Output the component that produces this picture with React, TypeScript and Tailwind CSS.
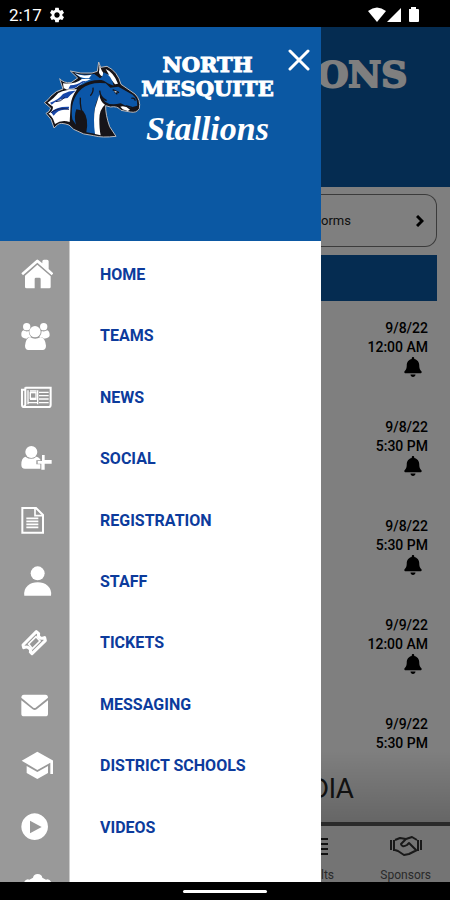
import type { ReactNode } from "react";
import { FaBell } from "react-icons/fa";
import { MdSettings } from "react-icons/md";

type MenuItem = { label: string; viewBox: string; art: ReactNode };

const MENU: MenuItem[] = [
  {
    label: "HOME",
    viewBox: "63 84 96 96",
    art: (
      <>
        <path d="M64 127 L109 87 Q112 84 115 87 L127 97 V91 Q127 86 132 86 H141 Q146 86 146 91 V114 L160 127 L155 133 L112 95 L69 133 Z" />
        <path d="M112 101 L152 136 V168 Q152 172 148 172 H122 V144 Q122 140 118 140 H108 Q104 140 104 144 V172 H80 Q75 172 75 168 V134 Z" />
      </>
    ),
  },
  {
    label: "TEAMS",
    viewBox: "63 267 96 96",
    art: (
      <>
        <circle cx="80" cy="287" r="11" />
        <circle cx="131" cy="287" r="11" />
        <circle cx="105" cy="302" r="17" />
        <path d="M70 298 Q79 303 86 300 Q86 311 93 318 Q82 318 80 323 Q64 322 64 313 Q63 301 70 298 Z" />
        <path d="M142 298 Q133 303 125 300 Q125 311 118 318 Q129 318 131 323 Q149 322 149 313 Q149 301 142 298 Z" />
        <path d="M90 318 Q105 328 122 318 Q136 322 138 344 Q138 356 128 357 H85 Q75 356 75 344 Q77 322 90 318 Z" />
      </>
    ),
  },
  {
    label: "NEWS",
    viewBox: "63 450 96 96",
    art: (
      <g fill="none" stroke="white" strokeWidth="6">
        <path d="M76 467 H152 V518 Q152 525 146 525 H73 Q66 525 66 518 V473 H75 M76 466 V518 Q75 524 70 525" />
        <path d="M84 475 V517 M113 475 V517 M90 477 H110 M90 502 H110 M117 481 H146 M117 491 H146 M117 501 H146 M117 512 H146 M84 512 H111" strokeWidth="4" />
        <rect x="91" y="482" width="17" height="17" strokeWidth="4" />
      </g>
    ),
  },
  {
    label: "SOCIAL",
    viewBox: "63 36 96 96",
    art: (
      <>
        <circle cx="94" cy="63" r="18" />
        <path d="M76 77 Q94 90 109 77 Q120 80 122 88 H109 V100 H121 V113 H75 Q64 113 64 101 Q64 80 76 77 Z" />
        <path d="M126 72 H134 V87 H155 V98 H134 V116 H124 V98 H113 V90 H126 Z" />
      </>
    ),
  },
  {
    label: "REGISTRATION",
    viewBox: "63 219 96 96",
    art: (
      <g fill="none" stroke="white" strokeWidth="6">
        <path d="M67 228 H108 L129 249 V302 H67 Z" />
        <path d="M105 229 V251 H128" strokeWidth="5" />
        <path d="M79 259 H115 M79 268 H115 M79 277 H115 M79 286 H115" strokeWidth="5" />
      </g>
    ),
  },
  {
    label: "STAFF",
    viewBox: "63 404 96 96",
    art: (
      <>
        <circle cx="113" cy="426" r="21" />
        <path d="M73 493 Q70 475 83 463 Q96 453 113 453 Q130 453 143 463 Q156 475 153 493 Z" />
      </>
    ),
  },
  {
    label: "TICKETS",
    viewBox: "63 18 96 96",
    art: (
      <g fill="none" stroke="white">
        <path d="M69 72 L109 32 L116 38 Q113 46 120 50 Q126 54 134 50 L136 59 L96 98 L91 93 Q94 86 87 81 Q80 76 71 80 Z" strokeWidth="9" strokeLinejoin="round" />
        <path d="M86 69 L108 47 L120 60 L97 83 Z" strokeWidth="5" />
      </g>
    ),
  },
  {
    label: "MESSAGING",
    viewBox: "63 202 96 96",
    art: (
      <>
        <path d="M64 228 Q64 219 72 219 H136 Q144 219 144 228 L107 258 Q104 260 100 258 Z" />
        <path d="M64 236 L98 263 Q104 267 110 263 L144 236 V276 Q144 284 136 284 H72 Q64 284 64 276 Z" />
      </>
    ),
  },
  {
    label: "DISTRICT SCHOOLS",
    viewBox: "63 387 96 96",
    art: (
      <>
        <path d="M65 419 L112 392 L160 419 V459 H151 V425 L112 447 Z" />
        <path d="M80 435 L112 453 L144 435 V456 L112 474 L80 456 Z" />
      </>
    ),
  },
  {
    label: "VIDEOS",
    viewBox: "63 573 96 96",
    art: <path fillRule="evenodd" d="M104 577 A40 40 0 1 1 103.900 577 Z M90 599 V637 L125 618 Z" />,
  },
  {
    label: "SETTINGS",
    viewBox: "63 756 96 96",
    art: (
      <path d="M99 770 Q101 759 113 759 Q125 759 127 770 L138 776 Q148 772 154 784 L158 806 V840 H68 V806 L72 784 Q78 772 88 776 Z" />
    ),
  },
];

const EVENTS = [
  { date: "9/8/22", time: "12:00 AM" },
  { date: "9/8/22", time: "5:30 PM" },
  { date: "9/8/22", time: "5:30 PM" },
  { date: "9/9/22", time: "12:00 AM" },
  { date: "9/9/22", time: "5:30 PM" },
];

const SLAB = "font-['DejaVu_Serif','Liberation_Serif',serif] font-bold";

function StatusBar() {
  return (
    <div className="flex h-[27px] shrink-0 items-center justify-between bg-black pl-[9px] pr-[31px] pt-[2px] text-white">
      <div className="flex items-center gap-[6px]">
        <span className="text-[17px] leading-5">2:17</span>
        <MdSettings className="h-[18px] w-[18px]" />
      </div>
      <svg viewBox="0 0 51 16" className="h-4 w-[51px]" fill="white" aria-hidden="true">
        <path d="M0 4 Q9 -3 18 4 L9 15 Z" />
        <path d="M33 1 V15 H19 Z" />
        <path d="M41 2 H43 V0 H48 V2 H50 Q51 2 51 3 V14 Q51 15 50 15 H42 Q41 15 41 14 Z" />
      </svg>
    </div>
  );
}

function Horse() {
  return (
    <svg viewBox="38 65 297 231" className="h-[77px] w-[99px] shrink-0" aria-hidden="true">
      <path
        d="M205 68 L211 84 L230 81 Q262 96 272 135 L314 164 Q332 182 327 208 Q318 222 300 218 L272 213 Q262 199 240 203 L226 199 Q225 225 238 262 L257 291 Q215 296 190 289 Q160 288 130 270 L116 257 Q90 248 82 256 L71 266 L62 240 L47 222 Q58 218 61 206 L42 190 Q54 182 62 170 L78 157 L98 149 L88 118 Q100 132 122 130 L142 116 L120 95 Q150 104 185 101 L201 96 Z"
        fill="#161419"
        stroke="#b9b9bd"
        strokeWidth="3"
        strokeLinejoin="round"
      />
      <path d="M132 101 Q160 110 192 104 L216 122 Q180 120 156 136 Q122 146 106 139 Q138 134 154 118 Z" fill="#0b56a8" />
      <path d="M133 102 Q154 112 184 106 L176 117 Q154 117 144 109 Z M98 132 Q134 136 155 119 L182 119 Q154 130 140 144 Q118 158 100 146 Z" fill="white" />
      <path d="M120 138 Q140 138 156 126 L170 124 Q150 132 138 144 Q126 150 114 148 Z" fill="#1746a8" />
      <path d="M52 190 Q70 178 84 161 Q110 149 140 150 Q124 172 121 196 L118 248 Q94 240 74 254 L68 238 Q59 225 54 223 Q68 216 68 202 Z" fill="white" />
      <path d="M59 190 Q82 184 98 164 Q118 153 136 154 Q120 166 112 176 Q88 176 64 196 Z M62 219 Q76 201 116 202 Q118 211 102 211 Q82 211 70 229 Z" fill="#1746a8" />
      <path d="M62 220 Q84 203 116 210 M76 187 Q90 188 104 174" fill="none" stroke="#15204f" strokeWidth="3" />
      <path d="M126 240 Q117 182 154 148 Q180 127 226 132 L240 145 L264 142 L307 166 Q322 178 321 199 L298 205 L271 192 Q240 200 224 187 L210 166 Q196 184 193 210 Q190 250 198 284 L168 279 Q176 236 158 214 L138 210 Q130 232 137 256 Z" fill="#0b56a8" />
      <path d="M207 77 L215 95 Q222 103 218 112 Q202 105 207 91 Z M226 89 Q249 98 263 133 L254 135 Q239 115 221 105 L236 106 Z" fill="white" />
      <path d="M220 99 Q243 107 250 139 L232 132 Q222 122 205 121 L216 111 Z" fill="#0b56a8" />
      <path d="M207 166 Q210 187 224 196 Q207 210 207 240 Q207 271 211 288 L194 284 Q188 240 194 207 Z" fill="white" />
      <path d="M270 202 Q285 198 299 211 L292 215 L277 210 Z" fill="white" />
      <path d="M208 154 Q210 176 229 184 M247 151 L266 160 M252 156 L261 165 M303 177 Q312 174 315 184 M286 199 L305 204 M180 169 Q190 159 188 145 M150 175 Q148 204 162 244" fill="none" stroke="#161419" strokeWidth="4" />
      <path d="M251 154 L260 157 L256 160 Z" fill="white" />
    </svg>
  );
}

function Drawer() {
  return (
    <aside className="flex w-[321px] shrink-0 flex-col overflow-hidden bg-white">
      <header className="flex h-[214px] shrink-0 items-start bg-[#0b58a3]">
        <div className="flex items-start pl-[43px] pt-[26px]">
          <div className="pt-2">
            <Horse />
          </div>
          <h1 className="w-[131px] text-center text-white">
            <span className={`${SLAB} block text-[21px] leading-6 [-webkit-text-stroke:1px_white]`}>NORTH</span>
            <span className={`${SLAB} flex justify-center text-[21px] leading-6 [-webkit-text-stroke:1px_white]`}>MESQUITE</span>
            <span className="block pt-1 font-['Liberation_Serif',serif] text-[34px] font-bold italic leading-[48px]">Stallions</span>
          </h1>
        </div>
        <button type="button" aria-label="Close menu" className="ml-[15px] mt-[22px] h-[22px] w-[22px]">
          <svg viewBox="0 0 22 22" className="h-[22px] w-[22px]" fill="none" stroke="white" strokeWidth="3" strokeLinecap="round">
            <path d="M2 2 L20 20 M20 2 L2 20" />
          </svg>
        </button>
      </header>
      <nav className="min-h-0 flex-1 overflow-hidden">
        <ul className="flex h-[679px] flex-col bg-[linear-gradient(to_right,#999999_69px,#cccccc_69px,#cccccc_70px,#ffffff_70px)] pt-[3px]">
          {MENU.map((item) => (
            <li key={item.label} className="flex-1">
              <a href="#" aria-label={item.label} className="flex h-full items-center gap-[47px] pl-[21px]">
                <svg viewBox={item.viewBox} className="h-8 w-8 shrink-0" fill="white" aria-hidden="true">
                  {item.art}
                </svg>
                {item.label !== "SETTINGS" && (
                  <span className="text-[16px] font-bold leading-5 text-[#0c3b9c]">{item.label}</span>
                )}
              </a>
            </li>
          ))}
        </ul>
      </nav>
    </aside>
  );
}

function Page() {
  return (
    <section className="relative flex min-w-0 flex-1 flex-col overflow-hidden bg-white text-black">
      <header className="h-40 shrink-0 bg-[#0b58a3] pt-[27px]">
        <div className={`${SLAB} -ml-1 text-[36px] leading-10 text-white [-webkit-text-stroke:2px_white]`}>ONS</div>
      </header>
      <div className="shrink-0 pr-[13px] pt-[7px]">
        <button
          type="button"
          className="flex h-[53px] w-full items-center justify-between rounded-r-xl border border-l-0 border-[#777777] pr-3 text-[13px] text-[#222222]"
        >
          <span>orms</span>
          <svg viewBox="0 0 8 12" className="h-3 w-2" fill="none" stroke="black" strokeWidth="3">
            <path d="M1 1 L6 6 L1 11" />
          </svg>
        </button>
        <div className="mt-2 h-[46px] bg-[#0b58a3]" />
      </div>
      <ul className="min-h-0 flex-1 overflow-hidden pr-[22px] pt-[18px]">
        {EVENTS.map((event, i) => (
          <li key={i} className="flex h-[99px] flex-col items-end text-[14px] font-medium leading-[19px]">
            <span>{event.date}</span>
            <span>{event.time}</span>
            {i < 4 && <FaBell className="mr-[5px] h-5 w-5" />}
          </li>
        ))}
      </ul>
      <div className="absolute inset-x-0 bottom-[60px] h-[72px] bg-gradient-to-b from-transparent to-black/20 pt-[22px] text-[#222222]">
        <div className="-ml-3 font-['Lato',sans-serif] text-[26px] leading-8">DIA</div>
      </div>
      <nav className="flex h-[60px] shrink-0 items-start justify-between border-t-4 border-[#555555] bg-[#e8e8e8] pr-[19px] pt-[9px] text-[12px] leading-4 text-[#555555]">
        <a href="#" className="flex flex-col gap-2">
          <svg viewBox="0 0 8 24" className="h-6 w-2" stroke="#222222" strokeWidth="2" aria-hidden="true">
            <path d="M0 4 H7 M0 9 H7 M0 14 H7 M0 19 H7" />
          </svg>
          lts
        </a>
        <a href="#" className="flex flex-col items-center gap-2">
          <svg viewBox="0 0 34 24" className="h-6 w-[34px]" fill="none" stroke="#333333" strokeWidth="2" strokeLinejoin="round" aria-hidden="true">
            <path d="M6 5 L11 3 L17 4 L23 2 L28 5 M6 15 L9 16 L15 20 L20 19 L28 15 M17 4 L12 9 Q13 13 18 10 L20 8 L27 15" />
            <path d="M2 5 V15 M32 5 V15" strokeWidth="2" />
            <path d="M5 5 V16 M29 5 V16" />
          </svg>
          Sponsors
        </a>
      </nav>
      <div className="absolute inset-0 bg-black/50" />
    </section>
  );
}

export default function App() {
  return (
    <div className="flex h-screen flex-col overflow-hidden font-['Roboto',sans-serif]">
      <StatusBar />
      <main className="flex min-h-0 flex-1">
        <Drawer />
        <Page />
      </main>
      <div className="flex h-[18px] shrink-0 items-center justify-center bg-black">
        <div className="h-[3px] w-[84px] rounded-full bg-white" />
      </div>
    </div>
  );
}
